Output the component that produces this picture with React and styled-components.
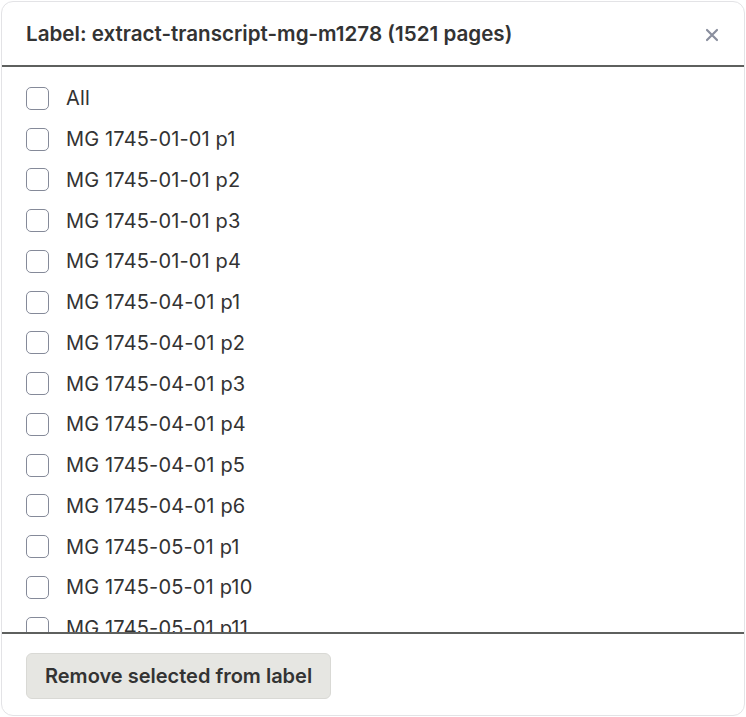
import React from "react";
import styled, { createGlobalStyle } from "styled-components";

const Global = createGlobalStyle`
  html, body { margin: 0; padding: 0; background: #ffffff; }
  body { font-family: Inter, "Noto Sans", sans-serif; }
  * { box-sizing: border-box; }
`;

const Modal = styled.div`
  width: 744px;
  height: 715px;
  margin: 1px;
  border: 1px solid #e3e3e6;
  border-radius: 12px;
  background: #fff;
  display: flex;
  flex-direction: column;
  overflow: hidden;
`;

const Header = styled.div`
  height: 65px;
  flex: none;
  display: flex;
  align-items: center;
  justify-content: space-between;
  padding: 2px 20px 0 24px;
  border-bottom: 2px solid #5e605e;
`;

const Title = styled.h2`
  margin: 0;
  font-size: 20.6px;
  font-weight: 600;
  line-height: 1.2;
  color: #333;
`;

const Close = styled.button`
  border: none;
  background: none;
  padding: 0;
  width: 24px;
  height: 24px;
  display: flex;
  align-items: center;
  justify-content: center;
  cursor: pointer;
`;

const List = styled.div`
  flex: 1;
  overflow: hidden;
  padding: 11px 0 0 24px;
  border-bottom: 2px solid #5e605e;
`;

const Row = styled.label`
  height: 40.75px;
  display: flex;
  align-items: center;
  gap: 17px;
  font-size: 20px;
  letter-spacing: 0.15px;
  color: #333;
`;

const Box = styled.span`
  width: 23px;
  height: 23px;
  flex: none;
  border: 1.5px solid #858a99;
  border-radius: 5px;
  background: #fff;
`;

const Footer = styled.div`
  height: 81px;
  flex: none;
  padding: 19px 0 0 24px;
`;

const Button = styled.button`
  height: 46px;
  padding: 0 18px;
  border: 1px solid #d9d9d5;
  border-radius: 6px;
  background: #e6e6e2;
  font-family: inherit;
  font-size: 20px;
  line-height: 1.2;
  font-weight: 600;
  color: #333;
`;

const items = [
  "All",
  "MG 1745-01-01 p1",
  "MG 1745-01-01 p2",
  "MG 1745-01-01 p3",
  "MG 1745-01-01 p4",
  "MG 1745-04-01 p1",
  "MG 1745-04-01 p2",
  "MG 1745-04-01 p3",
  "MG 1745-04-01 p4",
  "MG 1745-04-01 p5",
  "MG 1745-04-01 p6",
  "MG 1745-05-01 p1",
  "MG 1745-05-01 p10",
  "MG 1745-05-01 p11",
  "MG 1745-05-01 p12",
];

export default function App() {
  return (
    <>
      <Global />
      <Modal>
        <Header>
          <Title>Label: extract-transcript-mg-m1278 (1521 pages)</Title>
          <Close aria-label="Close">
            <svg width="14" height="14" viewBox="0 0 14 14">
              <path d="M2 2L12 12M12 2L2 12" stroke="#8a8f9e" strokeWidth="2.2" strokeLinecap="round" />
            </svg>
          </Close>
        </Header>
        <List>
          {items.map((t) => (
            <Row key={t}>
              <Box />
              {t}
            </Row>
          ))}
        </List>
        <Footer>
          <Button>Remove selected from label</Button>
        </Footer>
      </Modal>
    </>
  );
}
